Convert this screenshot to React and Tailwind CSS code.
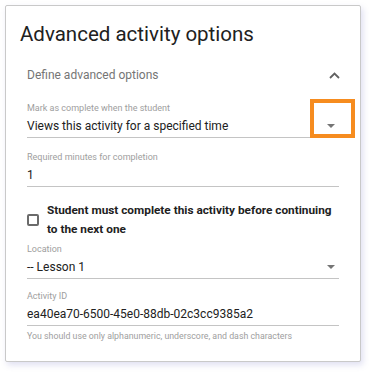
import React from "react";

function Arrow() {
  return (
    <div className="w-0 h-0 border-l-[4px] border-r-[4px] border-t-[4px] border-l-transparent border-r-transparent border-t-[#757575]" />
  );
}

function Field({ label, value, arrow, className = "" }) {
  return (
    <div className={className}>
      <div className="text-[9px] leading-[12px] text-[#9e9e9e]">{label}</div>
      <div className="mt-[3px] pb-[2px] flex items-center justify-between border-b border-[#c4c4c4]">
        <span className="text-[12px] leading-[18px] text-[#212121]">{value}</span>
        {arrow && (
          <div className="mr-[4px]">
            <Arrow />
          </div>
        )}
      </div>
    </div>
  );
}

export default function App() {
  return (
    <div className="w-[369px] h-[372px] bg-white pt-[5px] pl-[5px] relative" style={{ fontFamily: "Roboto, 'Liberation Sans', sans-serif" }}>
      <div className="w-[356px] h-[357px] border border-[#c9c9c9] rounded-[2px] bg-white shadow-[2px_3px_6px_rgba(110,110,190,0.22)] px-[14px] pt-[14px]">
        <div className="text-[20.5px] leading-[28px] text-[#212121]">Advanced activity options</div>
        <div className="mx-[7px]">
          <div className="mt-[17px] h-[20px] flex items-center justify-between">
            <span className="text-[12px] leading-[20px] text-[#757575]">Define advanced options</span>
            <svg width="11" height="7" viewBox="0 0 11 7" className="mr-[-1px]">
              <path d="M1 6 L5.5 1.5 L10 6" fill="none" stroke="#616161" strokeWidth="1.8" />
            </svg>
          </div>
          <Field className="mt-[17px]" label="Mark as complete when the student" value="Views this activity for a specified time" arrow />
          <Field className="mt-[13px]" label="Required minutes for completion" value="1" />
          <div className="mt-[14px] flex items-center gap-[8px]">
            <div className="w-[12px] h-[12px] border-2 border-[#6b6b6b] rounded-[2px] shrink-0" />
            <div className="w-[291px] text-[11.8px] leading-[19px] font-bold text-[#212121]">
              Student must complete this activity before continuing to the next one
            </div>
          </div>
          <Field className="mt-[4px]" label="Location" value="-- Lesson 1" arrow />
          <Field className="mt-[11px]" label="Activity ID" value="ea40ea70-6500-45e0-88db-02c3cc9385a2" />
          <div className="mt-[4px] text-[8.8px] leading-[12px] text-[#9e9e9e]">
            You should use only alphanumeric, underscore, and dash characters
          </div>
        </div>
      </div>
      <div className="absolute left-[310px] top-[99px] w-[45px] h-[39px] border-[4px] border-[#f68c1f]" />
    </div>
  );
}
